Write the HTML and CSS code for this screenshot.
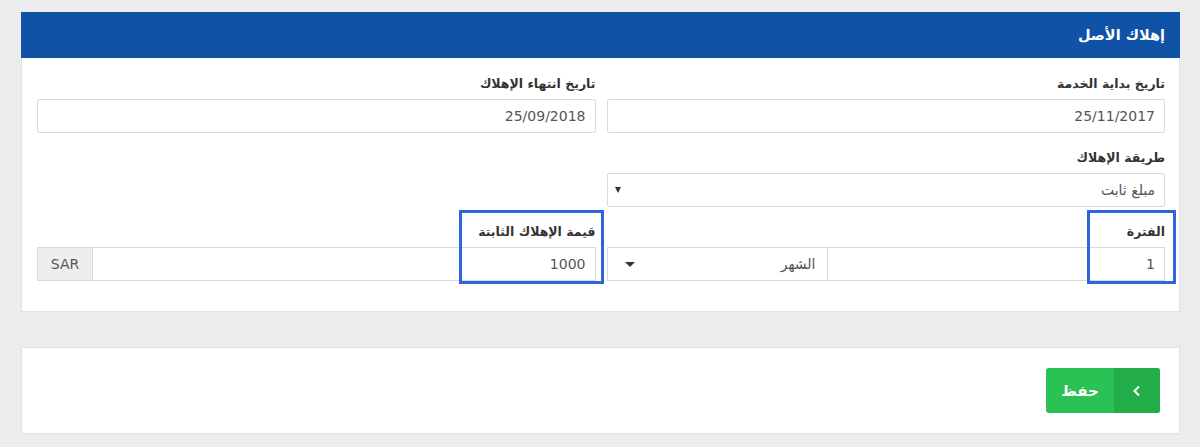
FILE: index.html
```html
<!DOCTYPE html>
<html lang="ar" dir="rtl">

<head>
    <meta charset="UTF-8">
    <meta name="viewport" content="width=device-width, initial-scale=1.0">
    <title>إهلاك الأصل</title>
    <link rel="stylesheet" href="styles.css">
</head>

<body>
    <div class="page">
        <div class="card">
            <div class="card-header">إهلاك الأصل</div>
            <div class="card-body">
                <div class="row">
                    <div class="form-group">
                        <label>تاريخ بداية الخدمة</label>
                        <input class="form-control" type="text" value="25/11/2017">
                    </div>
                    <div class="form-group">
                        <label>تاريخ انتهاء الإهلاك</label>
                        <input class="form-control" type="text" value="25/09/2018">
                    </div>
                </div>

                <div class="row">
                    <div class="form-group">
                        <label>طريقة الإهلاك</label>
                        <div class="form-control select">
                            <span>مبلغ ثابت</span>
                            <span class="caret small"></span>
                        </div>
                    </div>
                </div>

                <div class="row">
                    <div class="form-group">
                        <div class="mark mark-period"></div>
                        <label>الفترة</label>
                        <div class="input-group">
                            <input class="form-control period-input" type="text" value="1">
                            <div class="form-control select unit">
                                <span>الشهر</span>
                                <span class="caret"></span>
                            </div>
                        </div>
                    </div>
                    <div class="form-group">
                        <div class="mark mark-amount"></div>
                        <label>قيمة الإهلاك الثابتة</label>
                        <div class="input-group">
                            <input class="form-control" type="text" value="1000">
                            <span class="addon">SAR</span>
                        </div>
                    </div>
                </div>
            </div>
        </div>

        <div class="card actions">
            <button class="btn-save">
                <span class="btn-icon">
                    <svg width="10" height="12" viewBox="0 0 10 12">
                        <path d="M7 1.5 L2.5 6 L7 10.5" fill="none" stroke="#fff" stroke-width="2" />
                    </svg>
                </span>
                <span class="btn-text">حفظ</span>
            </button>
        </div>
    </div>
</body>

</html>
```

FILE: styles.css
```css
body {
    margin: 0;
    background: #ececec;
    font-family: "DejaVu Sans", "Open Sans", sans-serif;
    color: #333;
}

.page {
    padding: 12px 20px 0 21px;
}

.card {
    background: white;
    border: 1px solid #dde2e4;
}

.card-header {
    background: #0f52a6;
    color: white;
    font-weight: bold;
    font-size: 14.5px;
    height: 46px;
    line-height: 46px;
    padding: 0 15px;
    margin: -1px -1px 0;
}

.card-body {
    padding: 16px 14px 15px 15px;
}

.row {
    display: grid;
    grid-template-columns: 1fr 1fr;
    column-gap: 11px;
}

.form-group {
    position: relative;
    margin-bottom: 15px;
}

.form-group label {
    display: block;
    font-size: 12.5px;
    font-weight: bold;
    height: 20px;
    line-height: 20px;
    margin-bottom: 5px;
}

.form-control {
    display: block;
    box-sizing: border-box;
    width: 100%;
    height: 34px;
    border: 1px solid #d3dcdf;
    border-radius: 2px;
    padding: 0 9px;
    font-family: inherit;
    font-size: 14px;
    color: #555;
    text-align: right;
    background: white;
    outline: none;
}

.select {
    display: flex;
    align-items: center;
    justify-content: space-between;
    font-size: 14px;
}

.caret {
    width: 0;
    height: 0;
    border-left: 5px solid transparent;
    border-right: 5px solid transparent;
    border-top: 5px solid #333;
    margin-left: 5px;
}

.caret.small {
    border-left-width: 3px;
    border-right-width: 3px;
    border-top-width: 6px;
    margin-left: -2px;
}

.input-group {
    display: flex;
}

.input-group .form-control {
    border-radius: 0;
}

.period-input {
    flex: 1;
}

.unit {
    flex: 0 0 220px;
    border-right: none;
    padding-right: 11px;
    padding-left: 12px;
}

.addon {
    flex: 0 0 55px;
    box-sizing: border-box;
    height: 34px;
    line-height: 32px;
    background: #eeeeee;
    border: 1px solid #d3dcdf;
    border-right: none;
    color: #555;
    font-size: 14px;
    text-align: center;
}

.mark {
    position: absolute;
    top: -12px;
    bottom: -3px;
    border: 3px solid #2f64dc;
    pointer-events: none;
}

.mark-period {
    right: -11px;
    width: 83px;
}

.mark-amount {
    right: -8px;
    width: 139px;
}

.actions {
    margin-top: 35px;
    height: 45px;
    padding: 20px 19px;
    display: flex;
}

.btn-save {
    display: flex;
    height: 45px;
    padding: 0;
    border: none;
    border-radius: 3px;
    overflow: hidden;
    background: #2ac254;
    color: white;
    font-family: inherit;
    font-weight: bold;
    font-size: 15px;
    cursor: pointer;
}

.btn-icon {
    width: 46px;
    display: flex;
    align-items: center;
    justify-content: center;
    background: #23ad48;
}

.btn-text {
    width: 68px;
    display: flex;
    align-items: center;
    justify-content: center;
}
```
